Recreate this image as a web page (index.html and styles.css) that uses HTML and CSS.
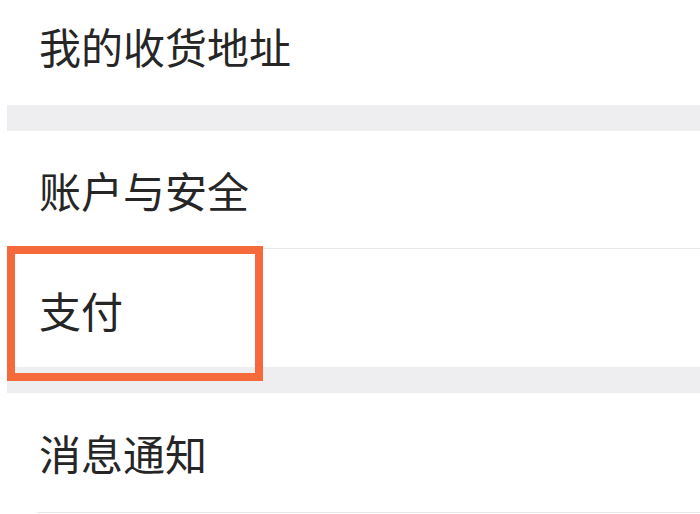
FILE: index.html
```html
<!DOCTYPE html>
<html lang="zh-CN">
<head>
<meta charset="utf-8">
<title>设置</title>
<link rel="stylesheet" href="styles.css">
</head>
<body>
<div class="page">
  <div class="list">
    <div class="row row-first"><span class="label">我的收货地址</span></div>
    <div class="gap"></div>
    <div class="row"><span class="label">账户与安全</span></div>
    <div class="divider"></div>
    <div class="row row-pay">
      <span class="label">支付</span>
      <div class="highlight"></div>
    </div>
    <div class="gap"></div>
    <div class="row row-last"><span class="label">消息通知</span></div>
    <div class="divider"></div>
  </div>
</div>
</body>
</html>
```
FILE: styles.css
```css
html, body {
  margin: 0;
  padding: 0;
  background: #ffffff;
}
.page {
  width: 700px;
  height: 514px;
  overflow: hidden;
  padding-left: 7px;
  box-sizing: border-box;
  background: #ffffff;
}
.list {
  display: flex;
  flex-direction: column;
}
.row {
  position: relative;
  display: flex;
  align-items: center;
  height: 117px;
  padding-left: 32px;
  background: #ffffff;
}
.row-first {
  height: 105px;
  padding-bottom: 14px;
  box-sizing: border-box;
}
.row-pay {
  height: 118px;
  padding-top: 4px;
  box-sizing: border-box;
}
.row-last {
  height: 119px;
}
.label {
  font-family: "Noto Sans CJK SC", "Noto Sans", sans-serif;
  font-size: 42px;
  line-height: 1;
  color: #262626;
  letter-spacing: 0;
}
.gap {
  height: 26px;
  background: #eeeef0;
}
.divider {
  height: 1px;
  margin-left: 30px;
  background: #e9e9eb;
}
.highlight {
  position: absolute;
  left: 0;
  top: -3px;
  width: 256px;
  height: 135px;
  border: 8px solid #f56a3b;
  box-sizing: border-box;
}
```
